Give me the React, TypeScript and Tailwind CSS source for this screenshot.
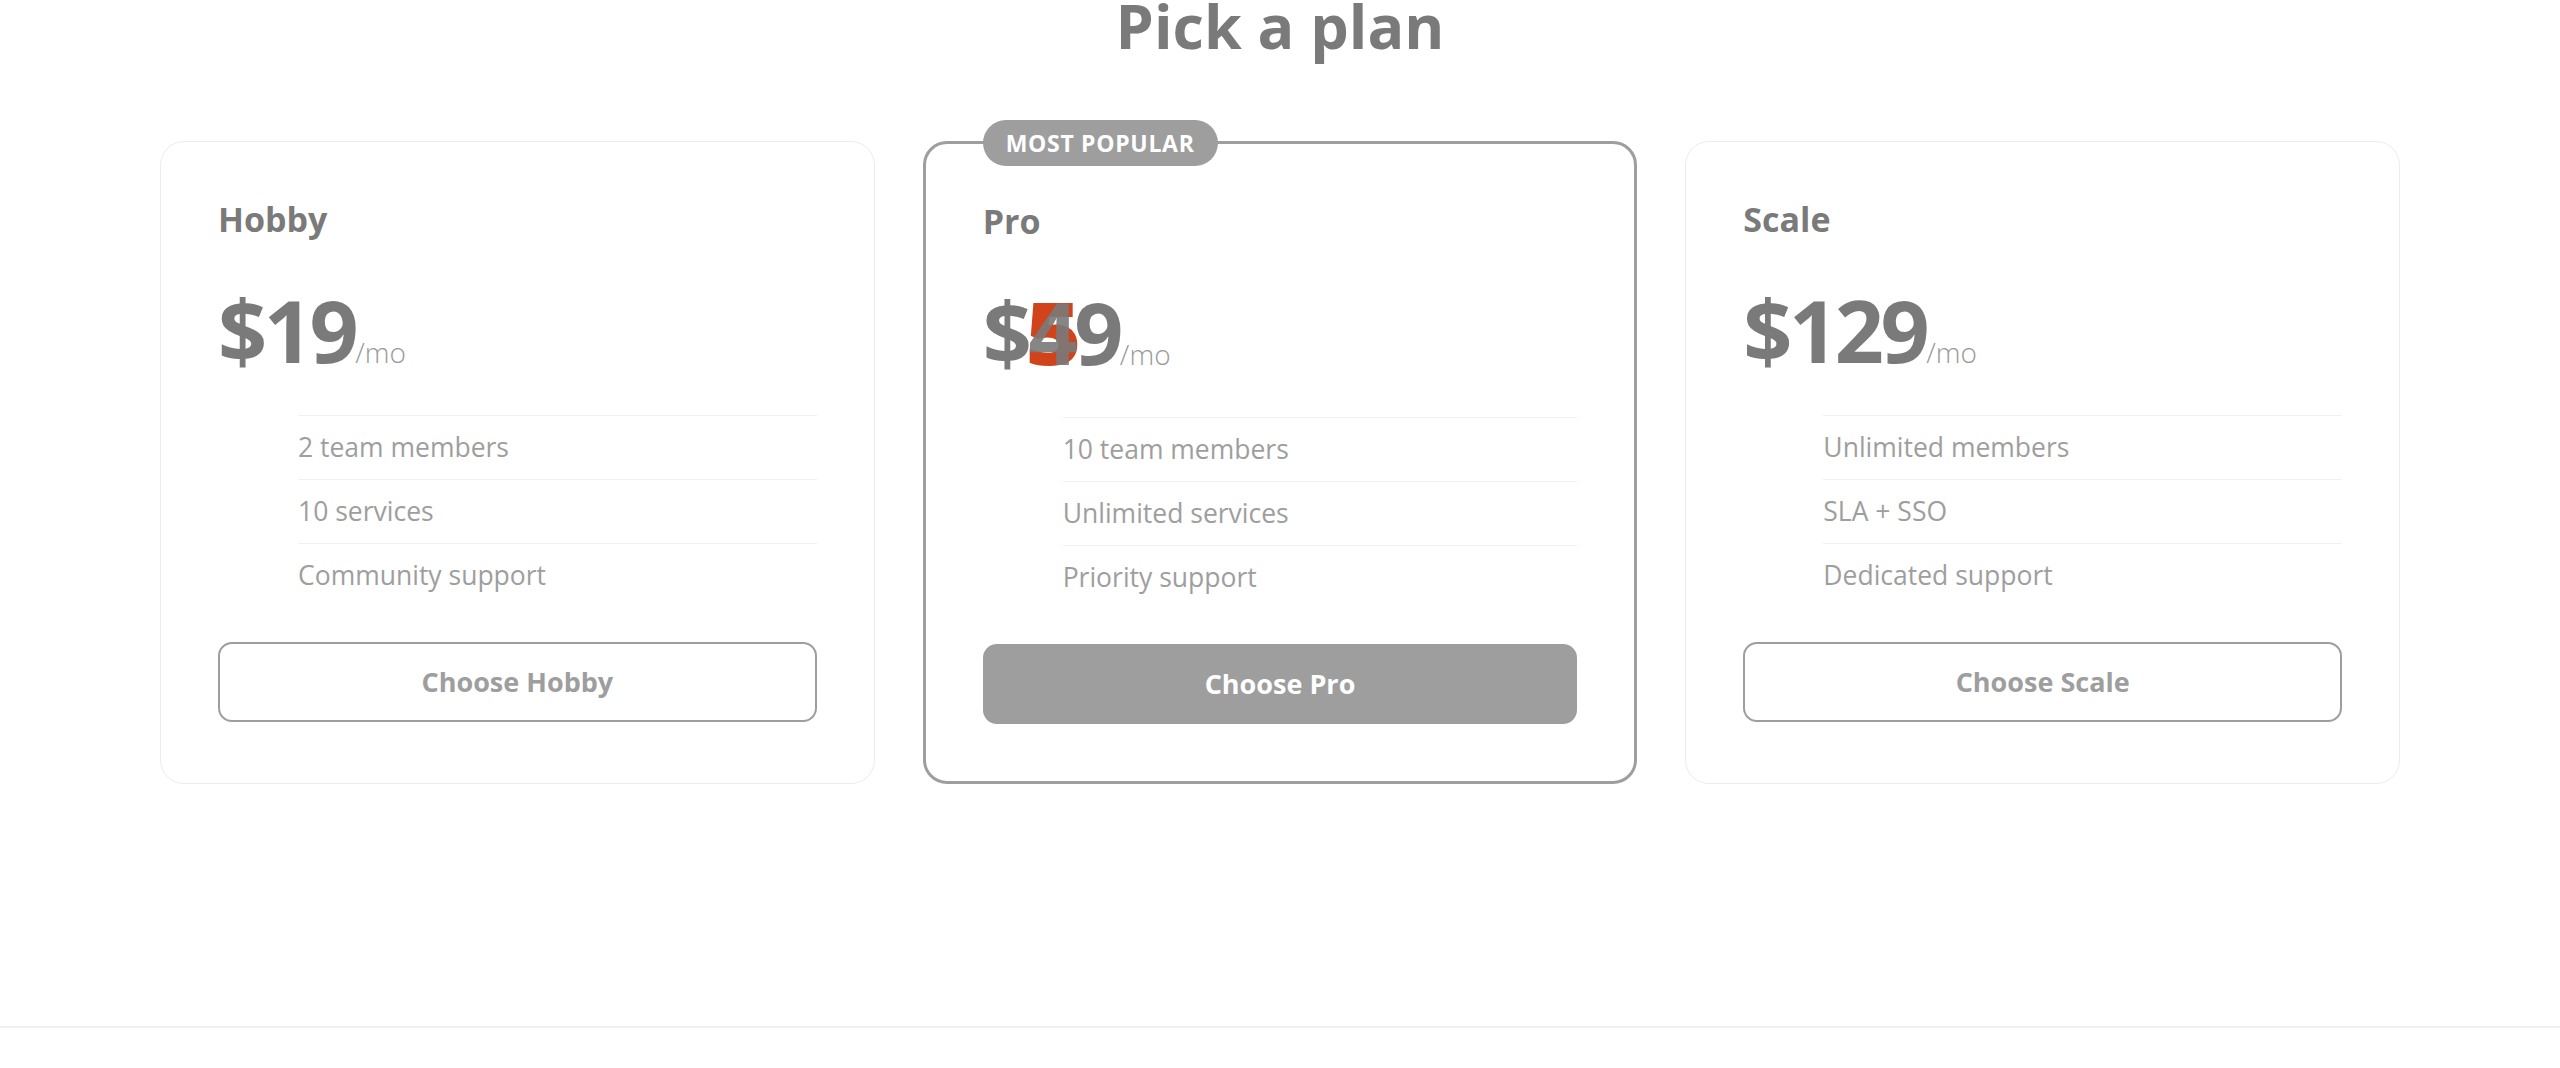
import React from "react";

type Plan = {
  name: string;
  price: string;
  features: string[];
  cta: string;
  popular?: boolean;
};

const plans: Plan[] = [
  {
    name: "Hobby",
    price: "19",
    features: ["2 team members", "10 services", "Community support"],
    cta: "Choose Hobby",
  },
  {
    name: "Pro",
    price: "49",
    features: ["10 team members", "Unlimited services", "Priority support"],
    cta: "Choose Pro",
    popular: true,
  },
  {
    name: "Scale",
    price: "129",
    features: ["Unlimited members", "SLA + SSO", "Dedicated support"],
    cta: "Choose Scale",
  },
];

// the Pro price shows a "5" bleeding through the "4"
function Price({ plan }: { plan: Plan }) {
  if (plan.popular) {
    return (
      <span>
        $
        <span className="relative inline-block">
          <span className="absolute inset-0 scale-x-[1.12] font-extrabold text-[#d1431a]">5</span>
          <span className="relative opacity-90">4</span>
        </span>
        9
      </span>
    );
  }
  return <span>${plan.price}</span>;
}

function PlanCard({ plan }: { plan: Plan }) {
  return (
    <div
      className={
        plan.popular
          ? "relative rounded-[24px] border-[3px] border-[#9e9e9e] bg-white px-[57px] pt-[57px] pb-[57px]"
          : "relative rounded-[24px] border border-[#ececec] bg-white px-[57px] pt-[57px] pb-[61px]"
      }
    >
      {plan.popular && (
        <div className="absolute left-[57px] top-[-24px] flex h-[46px] items-center rounded-full bg-[#9e9e9e] px-[23px] text-[23px] font-bold uppercase tracking-[0.03em] text-white">
          Most popular
        </div>
      )}
      <div className="text-[34px] leading-[40px] font-bold text-[#7a7a7a]">{plan.name}</div>
      <div className="mt-[48px] flex items-baseline">
        <span className="text-[86px] leading-none font-bold tracking-[-0.04em] text-[#7a7a7a]">
          <Price plan={plan} />
        </span>
        <span className="text-[28px] font-light text-[#9a9a9a]">/mo</span>
      </div>
      <ul className="mt-[42px] pl-[80px]">
        {plan.features.map((f) => (
          <li
            key={f}
            className="border-t border-[#f2f2f2] py-[14px] text-[26.5px] leading-[35px] text-[#9e9e9e]"
          >
            {f}
          </li>
        ))}
      </ul>
      <button
        className={
          plan.popular
            ? "mt-[35px] flex h-[80px] w-full items-center justify-center rounded-[14px] bg-[#9e9e9e] text-[27px] font-bold text-white"
            : "mt-[35px] flex h-[80px] w-full items-center justify-center rounded-[14px] border-2 border-[#9e9e9e] bg-white text-[27px] font-bold text-[#9e9e9e]"
        }
      >
        {plan.cta}
      </button>
    </div>
  );
}

export default function App() {
  return (
    <div
      className="min-h-[1068px] overflow-hidden bg-white"
      style={{ fontFamily: '"Open Sans", "Noto Sans", sans-serif' }}
    >
      <h1 className="mt-[-5px] text-center text-[61px] leading-none font-bold text-[#7a7a7a]">
        Pick a plan
      </h1>
      <div className="mx-auto mt-[85px] grid w-[2240px] grid-cols-3 items-start gap-12">
        {plans.map((p) => (
          <PlanCard key={p.name} plan={p} />
        ))}
      </div>
      <div className="mt-[242px] border-t-2 border-[#f0f0f0]" />
    </div>
  );
}
